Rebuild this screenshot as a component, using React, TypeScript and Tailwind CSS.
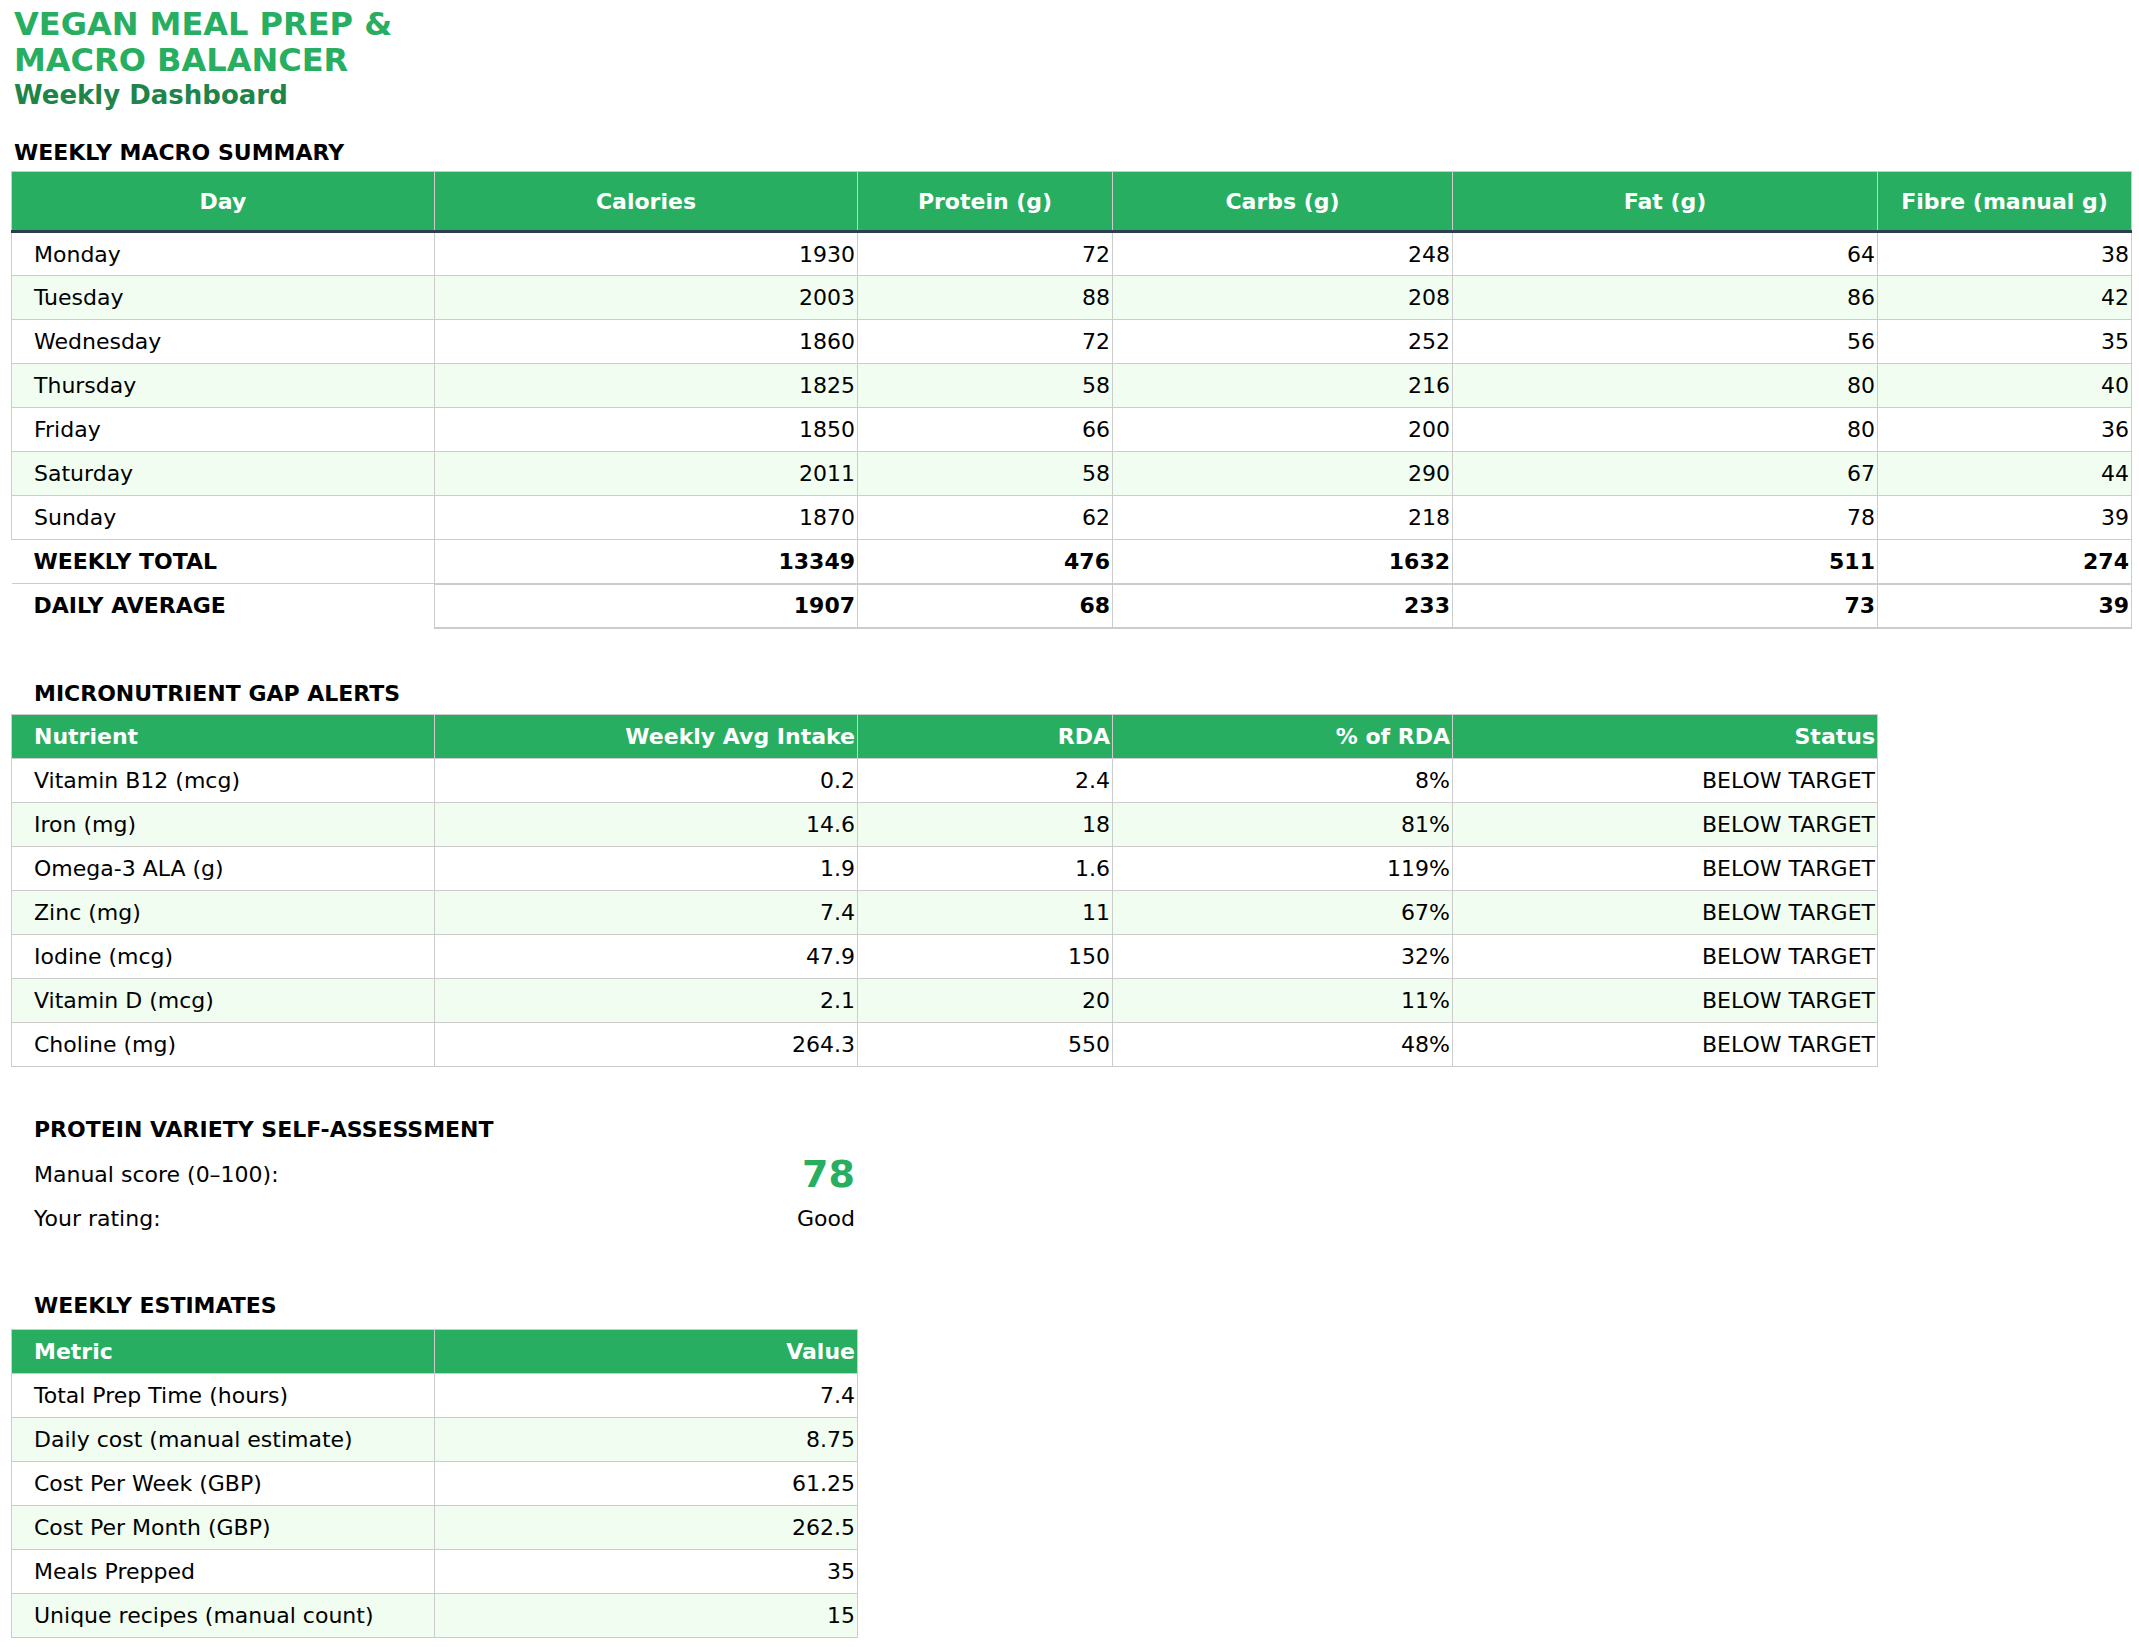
import React from "react";

const F = { fontFamily: '"DejaVu Sans", sans-serif' };

const macro = [
  ["Monday", 1930, 72, 248, 64, 38],
  ["Tuesday", 2003, 88, 208, 86, 42],
  ["Wednesday", 1860, 72, 252, 56, 35],
  ["Thursday", 1825, 58, 216, 80, 40],
  ["Friday", 1850, 66, 200, 80, 36],
  ["Saturday", 2011, 58, 290, 67, 44],
  ["Sunday", 1870, 62, 218, 78, 39],
];
const micro = [
  ["Vitamin B12 (mcg)", "0.2", "2.4", "8%"],
  ["Iron (mg)", "14.6", "18", "81%"],
  ["Omega-3 ALA (g)", "1.9", "1.6", "119%"],
  ["Zinc (mg)", "7.4", "11", "67%"],
  ["Iodine (mcg)", "47.9", "150", "32%"],
  ["Vitamin D (mcg)", "2.1", "20", "11%"],
  ["Choline (mg)", "264.3", "550", "48%"],
];
const est = [
  ["Total Prep Time (hours)", "7.4"],
  ["Daily cost (manual estimate)", "8.75"],
  ["Cost Per Week (GBP)", "61.25"],
  ["Cost Per Month (GBP)", "262.5"],
  ["Meals Prepped", "35"],
  ["Unique recipes (manual count)", "15"],
];
const W = [423, 423, 255, 340, 425, 254];

export default function App() {
  const td = "border border-[#cccccc] h-[44px] p-0 pr-[2px] text-right";
  const tdL = "border border-[#cccccc] h-[44px] p-0 pl-[22px] text-left";
  return (
    <div style={F} className="bg-white w-[2139px] min-h-[1647px] text-[22px] text-black pl-[11px] pt-[6px]">
      <div className="pl-[3px] font-bold text-[#27ae60] text-[32px] leading-[36px]">VEGAN MEAL PREP &amp;<br />MACRO BALANCER</div>
      <div className="pl-[3px] font-bold text-[#1e8449] text-[26px] leading-[34px]">Weekly Dashboard</div>

      <div className="pl-[3px] mt-[28px] font-bold leading-[26px]">WEEKLY MACRO SUMMARY</div>
      <table className="border-collapse table-fixed mt-[5px]" style={{ width: 2120 }}>
        <colgroup>{W.map((w, i) => <col key={i} style={{ width: w }} />)}</colgroup>
        <thead>
          <tr className="bg-[#27ae60] text-white font-bold">
            {["Day", "Calories", "Protein (g)", "Carbs (g)", "Fat (g)", "Fibre (manual g)"].map((h) => (
              <th key={h} className="h-[60px] border border-[#cccccc] border-b-[3px] border-b-[#2c3e50] text-center font-bold">{h}</th>
            ))}
          </tr>
        </thead>
        <tbody>
          {macro.map((r, i) => (
            <tr key={i} className={i % 2 ? "bg-[#f0fdf0]" : "bg-white"}>
              <td className={tdL}>{r[0]}</td>
              {r.slice(1).map((v, j) => <td key={j} className={td}>{v}</td>)}
            </tr>
          ))}
          {[["WEEKLY TOTAL", 13349, 476, 1632, 511, 274], ["DAILY AVERAGE", 1907, 68, 233, 73, 39]].map((r, i) => (
            <tr key={i} className="font-bold">
              <td className="h-[44px] pl-[22px] text-left border-t border-t-[#cccccc]">{r[0]}</td>
              {r.slice(1).map((v, j) => <td key={j} className={td + " border-b-2"}>{v}</td>)}
            </tr>
          ))}
        </tbody>
      </table>

      <div className="pl-[23px] mt-[52px] font-bold leading-[26px]">MICRONUTRIENT GAP ALERTS</div>
      <table className="border-collapse table-fixed mt-[7px]" style={{ width: 1866 }}>
        <colgroup>{W.slice(0, 5).map((w, i) => <col key={i} style={{ width: w }} />)}</colgroup>
        <thead>
          <tr className="bg-[#27ae60] text-white">
            {["Nutrient", "Weekly Avg Intake", "RDA", "% of RDA", "Status"].map((h, i) => (
              <th key={h} className={"h-[44px] border border-[#cccccc] font-bold " + (i === 0 ? "text-left pl-[22px]" : "text-right pr-[2px]")}>{h}</th>
            ))}
          </tr>
        </thead>
        <tbody>
          {micro.map((r, i) => (
            <tr key={i} className={i % 2 ? "bg-[#f0fdf0]" : "bg-white"}>
              <td className={tdL}>{r[0]}</td>
              <td className={td}>{r[1]}</td>
              <td className={td}>{r[2]}</td>
              <td className={td}>{r[3]}</td>
              <td className={td}>BELOW TARGET</td>
            </tr>
          ))}
        </tbody>
      </table>

      <div className="pl-[23px] mt-[50px] font-bold leading-[26px]">PROTEIN VARIETY SELF-ASSESSMENT</div>
      <div className="w-[846px] pl-[23px] pr-[2px] mt-[10px]">
        <div className="flex justify-between items-center h-[44px]"><span>Manual score (0–100):</span><span className="font-bold text-[#27ae60] text-[38px]">78</span></div>
        <div className="flex justify-between items-center h-[44px]"><span>Your rating:</span><span>Good</span></div>
      </div>

      <div className="pl-[23px] mt-[52px] font-bold leading-[26px]">WEEKLY ESTIMATES</div>
      <table className="border-collapse table-fixed mt-[10px]" style={{ width: 846 }}>
        <colgroup><col style={{ width: 423 }} /><col style={{ width: 423 }} /></colgroup>
        <thead>
          <tr className="bg-[#27ae60] text-white">
            <th className="h-[44px] border border-[#cccccc] font-bold text-left pl-[22px]">Metric</th>
            <th className="h-[44px] border border-[#cccccc] font-bold text-right pr-[2px]">Value</th>
          </tr>
        </thead>
        <tbody>
          {est.map((r, i) => (
            <tr key={i} className={i % 2 ? "bg-[#f0fdf0]" : "bg-white"}>
              <td className={tdL}>{r[0]}</td>
              <td className={td}>{r[1]}</td>
            </tr>
          ))}
        </tbody>
      </table>
    </div>
  );
}
